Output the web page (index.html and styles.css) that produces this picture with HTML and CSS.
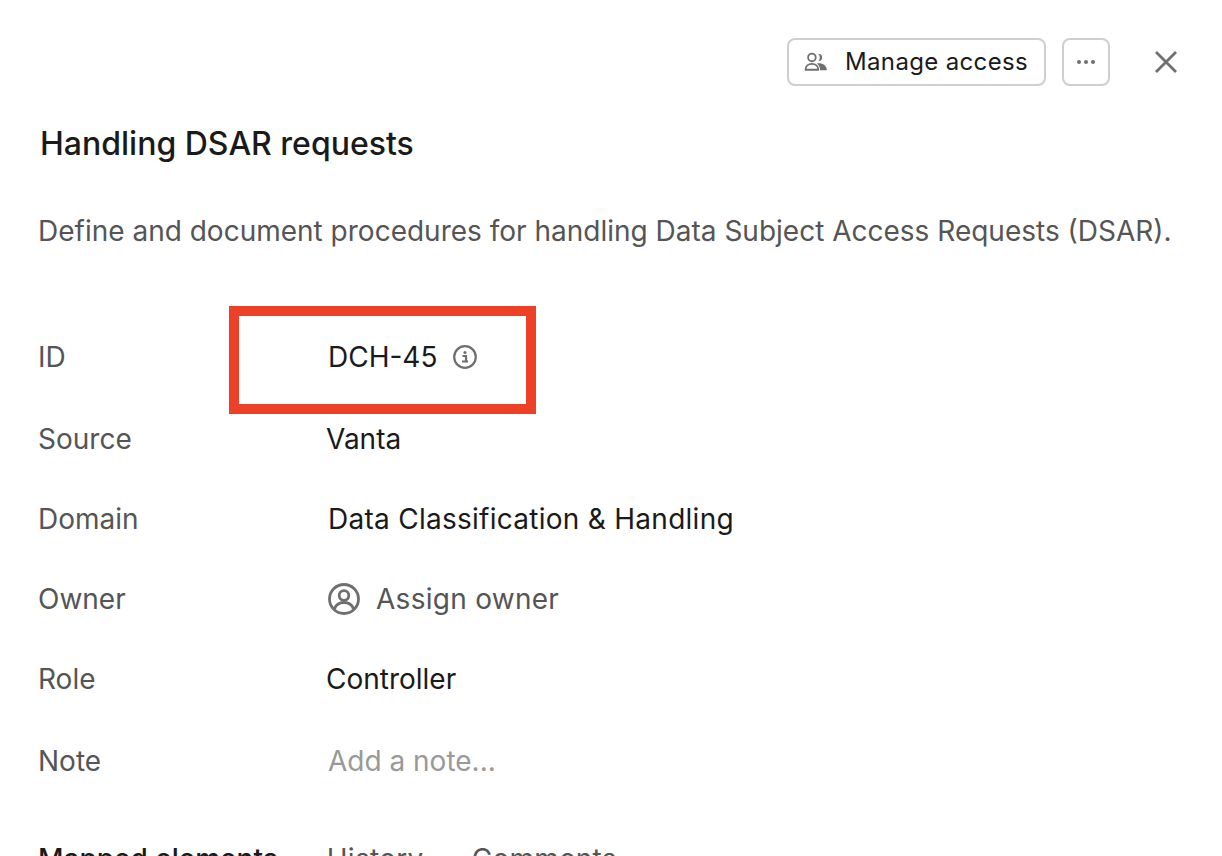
FILE: index.html
```html
<!DOCTYPE html>
<html>
<head>
    <link rel="stylesheet" href="styles.css">
</head>
<body>
    <div class="panel">
        <div class="toolbar">
            <button class="btn manage">
                <svg class="icon-people" viewBox="0 0 26 22" width="24" height="20">
                    <circle cx="8.5" cy="6" r="4.2" fill="none" stroke="#6f6f6f" stroke-width="2"/>
                    <path d="M15.5 1.8a4.2 4.2 0 1 1 0 8.4a6 6 0 0 0 0-8.4z" fill="#6f6f6f"/>
                    <path d="M1.5 19.5c0-4 3-6.5 7-6.5s7 2.500 7 6.500z" fill="none" stroke="#6f6f6f" stroke-width="2" stroke-linejoin="round"/>
                    <path d="M14 12.500c5.500-1 10.500 1.500 11 7.500h-7.500c0-3-1.200-5.500-3.500-7.500z" fill="#6f6f6f"/>
                </svg>
                <span class="btn-text">Manage access</span>
            </button>
            <button class="btn more">
                <svg viewBox="0 0 20 4" width="20" height="4">
                    <circle cx="3" cy="2" r="2" fill="#6f6f6f"/>
                    <circle cx="10" cy="2" r="2" fill="#6f6f6f"/>
                    <circle cx="17" cy="2" r="2" fill="#6f6f6f"/>
                </svg>
            </button>
            <button class="close">
                <svg viewBox="0 0 24 24" width="24" height="24">
                    <path d="M2 2L22 22M22 2L2 22" stroke="#6f6f6f" stroke-width="2.800" fill="none"/>
                </svg>
            </button>
        </div>

        <h1 class="title">Handling DSAR requests</h1>
        <p class="desc">Define and document procedures for handling Data Subject Access Requests (DSAR).</p>

        <div class="fields">
            <div class="row tall">
                <div class="label">ID</div>
                <div class="value">
                    DCH-45
                    <svg class="icon-info" viewBox="0 0 24 24" width="24" height="24">
                        <circle cx="12" cy="12" r="10.800" fill="none" stroke="#6f6f6f" stroke-width="2.200"/>
                        <circle cx="12" cy="7.500" r="1.600" fill="#6f6f6f"/>
                        <path d="M9.500 11h3.500v5.500h2M9 16.500h6" fill="none" stroke="#6f6f6f" stroke-width="2.200"/>
                    </svg>
                </div>
            </div>
            <div class="row">
                <div class="label">Source</div>
                <div class="value flush">Vanta</div>
            </div>
            <div class="row">
                <div class="label">Domain</div>
                <div class="value spaced">Data Classification &amp; Handling</div>
            </div>
            <div class="row">
                <div class="label">Owner</div>
                <div class="value muted owner spaced">
                    <svg viewBox="0 0 32 32" width="32" height="32">
                        <circle cx="16" cy="16" r="14.500" fill="none" stroke="#6f6f6f" stroke-width="2.800"/>
                        <circle cx="16" cy="12.500" r="4.800" fill="none" stroke="#6f6f6f" stroke-width="2.800"/>
                        <path d="M6.500 26c1.500-5 5-6.500 9.500-6.500s8 1.500 9.500 6.500" fill="none" stroke="#6f6f6f" stroke-width="2.800"/>
                    </svg>
                    Assign owner
                </div>
            </div>
            <div class="row">
                <div class="label">Role</div>
                <div class="value flush">Controller</div>
            </div>
            <div class="row tall">
                <div class="label">Note</div>
                <div class="value placeholder">Add a note...</div>
            </div>
        </div>

        <div class="tabs">
            <div class="tab active">Mapped elements</div>
            <div class="tab">History</div>
            <div class="tab">Comments</div>
        </div>

        <div class="highlight"></div>
    </div>
</body>
</html>
```

FILE: styles.css
```css
html, body {
    margin: 0;
    height: 100%;
    background-color: #fff;
    overflow: hidden;
}
body {
    font-family: Inter, "Liberation Sans", sans-serif;
    font-size: 28px;
    color: #1a1a1a;
}
.panel {
    position: relative;
    height: 856px;
    padding: 38px 44px 0 38px;
    box-sizing: border-box;
    overflow: hidden;
}
.toolbar {
    display: flex;
    justify-content: flex-end;
    align-items: center;
}
.btn {
    display: flex;
    align-items: center;
    justify-content: center;
    height: 48px;
    box-sizing: border-box;
    background: #fff;
    border: 2px solid #cfcfcf;
    border-radius: 8px;
    font: inherit;
    color: inherit;
    padding: 0;
}
.manage {
    width: 259px;
    justify-content: flex-start;
    padding-left: 15px;
    font-size: 24px;
    letter-spacing: 0.35px;
    gap: 17px;
}
.btn-text {
    margin-top: -2px;
}
.more {
    width: 48px;
    margin-left: 16px;
}
.close {
    display: flex;
    background: none;
    border: 0;
    padding: 0;
    margin-left: 44px;
}
.title {
    margin: 38px 0 0 2px;
    font-size: 32px;
    font-weight: 500;
    line-height: 40px;
}
.desc {
    margin: 49px 0 0;
    line-height: 36px;
    color: #555;
    white-space: nowrap;
}
.fields {
    margin-top: 66px;
}
.row {
    display: flex;
    align-items: center;
    height: 80px;
    color: #555;
}
.row.tall {
    height: 84px;
}
.label {
    width: 290px;
}
.value {
    display: flex;
    align-items: center;
    color: #1a1a1a;
}
.flush {
    margin-left: -2px;
}
.spaced {
    letter-spacing: 0.27px;
}
.muted {
    color: #555;
}
.owner {
    gap: 16px;
}
.placeholder {
    color: #999;
}
.icon-info {
    margin-left: 16px;
}
.tabs {
    display: flex;
    margin-top: 39px;
    color: #555;
    letter-spacing: 0.3px;
}
.tab {
    margin-right: 48px;
}
.tab.active {
    color: #1a1a1a;
    font-weight: 500;
    letter-spacing: 0;
    margin-right: 49px;
}
.highlight {
    position: absolute;
    left: 229px;
    top: 306px;
    width: 307px;
    height: 108px;
    box-sizing: border-box;
    border: 10px solid #ec4126;
}
```
